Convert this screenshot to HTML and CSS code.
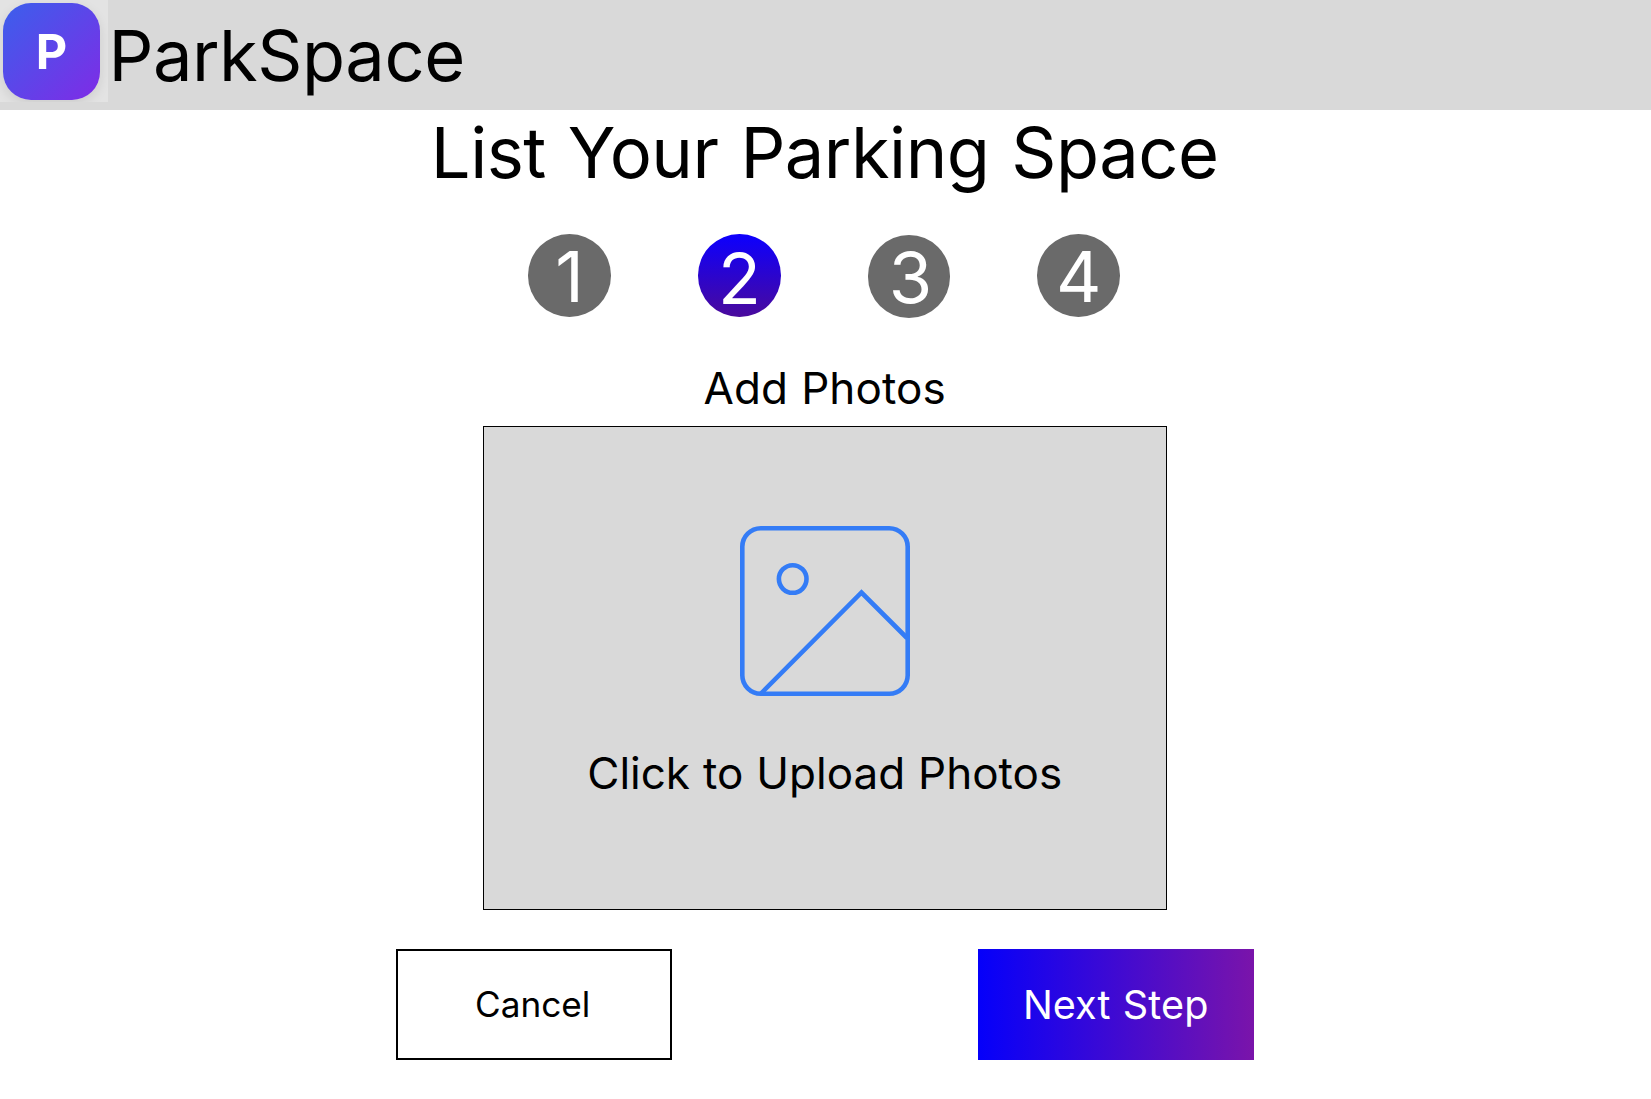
FILE: index.html
```html
<!DOCTYPE html>
<html lang="en">
<head>
  <meta charset="utf-8">
  <title>ParkSpace – List Your Parking Space</title>
  <link rel="stylesheet" href="styles.css">
</head>
<body>
  <header class="header">
    <div class="logo"><div class="logo-mark">P</div></div>
    <div class="brand">ParkSpace</div>
  </header>
  <main class="main">
    <h1 class="title">List Your Parking Space</h1>
    <ol class="steps">
      <li class="step step-one">1</li>
      <li class="step step-two step-active">2</li>
      <li class="step step-three">3</li>
      <li class="step step-four">4</li>
    </ol>
    <h2 class="subtitle">Add Photos</h2>
    <div class="dropzone">
      <svg class="picture" viewBox="0 0 170 170" fill="none" stroke="#347cf6" stroke-width="4.6">
        <rect x="2.3" y="2.3" width="165.4" height="165.4" rx="18.5"/>
        <circle cx="52.7" cy="53" r="13.8"/>
        <path d="M21 167.500L121.500 66.500L167 112"/>
      </svg>
      <div class="dropzone-label">Click to Upload Photos</div>
    </div>
    <div class="actions">
      <button class="button cancel">Cancel</button>
      <button class="button next">Next Step</button>
    </div>
  </main>
</body>
</html>
```
FILE: styles.css
```css
* {
  box-sizing: border-box;
}

body {
  margin: 0;
  background: #fff;
  color: #000;
  font-family: Inter, "Liberation Sans", sans-serif;
}

.header {
  display: flex;
  height: 109.5px;
  background: #d9d9d9;
}

.logo {
  width: 108.4px;
  height: 102px;
  padding: 3px;
  overflow: hidden;
  background: #e3e3e3;
}

.logo-mark {
  width: 97px;
  height: 97px;
  border-radius: 28px;
  background: linear-gradient(135deg, #3b5fec, #7f2be6);
  box-shadow: 0 4px 12px rgba(0, 0, 0, 0.1);
  color: #fff;
  font-size: 48.5px;
  font-weight: 700;
  line-height: 97px;
  text-align: center;
}

.brand {
  padding-top: 13px;
  font-size: 70.4px;
  letter-spacing: -0.45px;
  line-height: 85px;
}

.main {
  display: flex;
  flex-direction: column;
  align-items: center;
  padding-right: 1.6px;
}

.title {
  margin: 0;
  font-size: 70.4px;
  font-weight: 400;
  letter-spacing: -0.5px;
  line-height: 85px;
  word-spacing: 2.6px;
}

.steps {
  display: flex;
  gap: 87px;
  margin: 39.5px 0 0;
  padding: 0 1px 0 0;
  list-style: none;
}

.step {
  width: 82.7px;
  height: 82.7px;
  border-radius: 50%;
  background: #6a6a6a;
  color: #fff;
  font-size: 70.4px;
  line-height: 85px;
  text-align: center;
}

.step-active {
  background: linear-gradient(#0f00fa 5%, #4a0a9c);
}

.step-two {
  line-height: 89px;
}

.step-three {
  margin-top: 1px;
  margin-bottom: -1px;
  padding-left: 3px;
}

.subtitle {
  margin: 45.3px 0 0;
  font-size: 44px;
  font-weight: 400;
  letter-spacing: 0.1px;
  line-height: 53px;
  word-spacing: 0.6px;
}

.dropzone {
  display: flex;
  flex-direction: column;
  align-items: center;
  width: 684px;
  height: 484px;
  margin-top: 11.5px;
  padding-top: 99px;
  border: 1px solid #000;
  background: #d9d9d9;
}

.picture {
  width: 170px;
  height: 170px;
}

.dropzone-label {
  margin-top: 50.5px;
  font-size: 44px;
  line-height: 53px;
  word-spacing: 0.6px;
}

.actions {
  display: flex;
  gap: 306px;
  margin-top: 38.6px;
}

.button {
  width: 276px;
  height: 110.5px;
  padding: 0;
  border: 0;
  font-family: inherit;
}

.cancel {
  padding-right: 2px;
  border: 2px solid #000;
  background: #fff;
  color: #000;
  font-size: 35.2px;
}

.next {
  padding-top: 2px;
  background: linear-gradient(90deg, #0500fa, #7a14aa);
  color: #fff;
  font-size: 39.6px;
  letter-spacing: 0.1px;
  word-spacing: 1px;
}
```
